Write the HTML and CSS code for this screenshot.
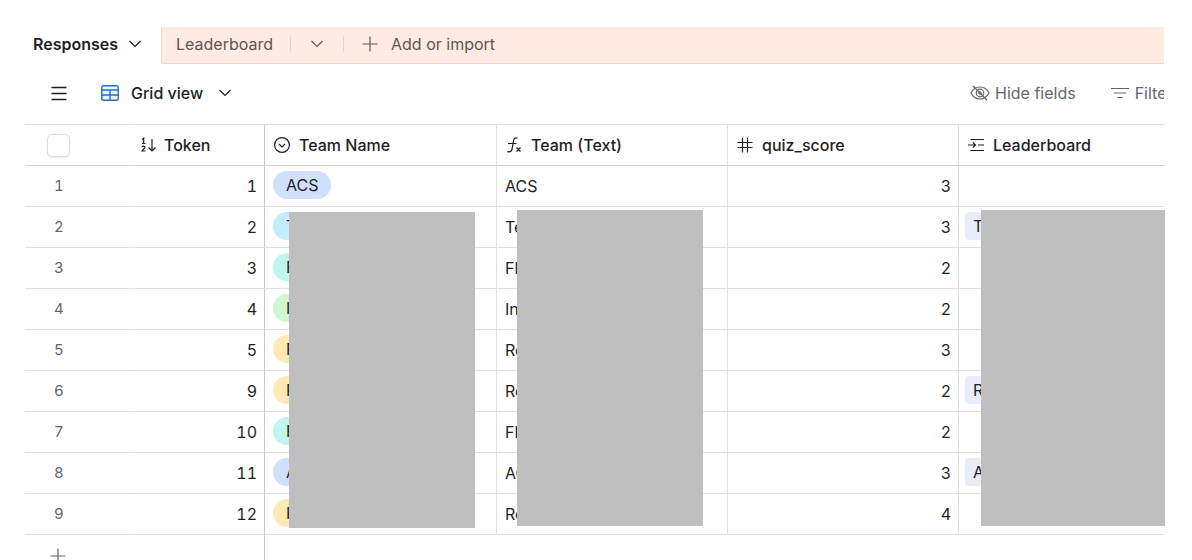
FILE: index.html
```html
<!doctype html>
<html lang="en">
  <head>
    <meta charset="utf-8">
    <title>Responses: Grid view</title>
    <meta name="viewport" content="width=device-width, initial-scale=1.0">
    <link rel="stylesheet" href="styles.css">
  </head>
  <body>
    <nav class="tabs">
      <button class="tab tab-active" type="button">
        Responses
        <svg class="chevron" viewBox="0 0 12 8"><path d="M.5 1l5.500 5.500 5.500-5.500"/></svg>
      </button>
      <div class="tab-strip">
        <button class="tab" type="button">Leaderboard</button>
        <button class="tab tab-more" type="button" aria-label="All tables">
          <svg class="chevron" viewBox="0 0 12 8"><path d="M.5 1l5.500 5.500 5.500-5.500"/></svg>
        </button>
        <button class="tab tab-add" type="button">
          <svg class="icon" viewBox="0 0 16 16"><path d="M8 .5v15M.5 8h15"/></svg>
          Add or import
        </button>
      </div>
    </nav>

    <div class="toolbar">
      <button class="tool menu" type="button" aria-label="Views">
        <svg class="icon" viewBox="0 0 16 16"><path d="M.5 2.500h15M.5 8.500h15M.5 14.500h15"/></svg>
      </button>
      <button class="tool view" type="button">
        <svg class="icon-grid" viewBox="0 0 18 16">
          <rect x=".75" y=".75" width="16.500" height="14.500" rx="1.500"/>
          <path d="M1 5h16M1 10h16M9 5v10"/>
        </svg>
        Grid view
        <svg class="chevron" viewBox="0 0 12 8"><path d="M.5 1l5.500 5.500 5.500-5.500"/></svg>
      </button>
      <div class="tool-group">
        <button class="tool hide" type="button">
          <svg class="icon-eye" viewBox="0 0 20 16">
            <path d="M1 8c2-4 5-6 9-6s7 2 9 6c-2 4-5 6-9 6S3 12 1 8z"/>
            <circle cx="10" cy="8" r="3.800"/>
            <circle cx="10" cy="8" r="1.200"/>
            <path d="M3 1l14 14"/>
          </svg>
          Hide fields
        </button>
        <button class="tool filter" type="button">
          <svg class="icon-filter" viewBox="0 0 18 12"><path d="M0 1.500h18M3 6h12M6.500 10.500h5"/></svg>
          Filter
        </button>
      </div>
    </div>

    <main class="grid">
      <div class="grid-scroll">
        <table>
          <colgroup>
            <col class="col-row">
            <col class="col-token">
            <col class="col-team">
            <col class="col-text">
            <col class="col-score">
            <col>
          </colgroup>
          <thead>
            <tr>
              <th class="row-head"><input type="checkbox" aria-label="Select all rows"></th>
              <th class="token">
                <span class="field">
                  <svg class="icon" viewBox="0 0 16 16">
                    <path d="M1 2.500l1.700-1.300v5.300M1 6.500h3.400M1 10.200c.2-1.500 3-1.500 3 .1 0 1.200-2.500 2-3 3.700h3.400M11 2v12M7.500 10.500L11 14l3.500-3.500"/>
                  </svg>
                  Token
                </span>
              </th>
              <th>
                <span class="field">
                  <svg class="icon" viewBox="0 0 16 16"><circle cx="8" cy="8" r="7.400"/><path d="M5 7l3 3 3-3"/></svg>
                  Team Name
                </span>
              </th>
              <th>
                <span class="field">
                  <svg class="icon" viewBox="0 0 16 16">
                    <path d="M11.500 1.300c-2.500-1-3.500 0-4 2.500L6 12.300c-.5 2.200-2 3-4.700 2.400M2 6.500h8.500M10.500 10.500l4 4M14.500 10.500l-4 4"/>
                  </svg>
                  Team (Text)
                </span>
              </th>
              <th>
                <span class="field">
                  <svg class="icon" viewBox="0 0 16 16"><path d="M5.500 .5v15M10.500 .5v15M.5 5.500h15M.5 10.500h15"/></svg>
                  quiz_score
                </span>
              </th>
              <th>
                <span class="field">
                  <svg class="icon" viewBox="0 0 16 16">
                    <path d="M2.500 2.500H16M2.500 13.500H16M10 8h6M0 8h7.500M5 5.500L7.500 8 5 10.500"/>
                  </svg>
                  Leaderboard
                </span>
              </th>
            </tr>
          </thead>
          <tbody>
            <tr>
              <td class="row-head">1</td>
              <td class="token">1</td>
              <td><span class="pill blue">ACS</span></td>
              <td>ACS</td>
              <td class="score">3</td>
              <td></td>
            </tr>
            <tr>
              <td class="row-head">2</td>
              <td class="token">2</td>
              <td><span class="pill cyan">Te</span></td>
              <td>Te</td>
              <td class="score">3</td>
              <td class="linked"><span class="record">T</span></td>
            </tr>
            <tr>
              <td class="row-head">3</td>
              <td class="token">3</td>
              <td><span class="pill teal">Fl</span></td>
              <td>Fl</td>
              <td class="score">2</td>
              <td></td>
            </tr>
            <tr>
              <td class="row-head">4</td>
              <td class="token">4</td>
              <td><span class="pill green">In</span></td>
              <td>In</td>
              <td class="score">2</td>
              <td></td>
            </tr>
            <tr>
              <td class="row-head">5</td>
              <td class="token">5</td>
              <td><span class="pill yellow">Ro</span></td>
              <td>Ro</td>
              <td class="score">3</td>
              <td></td>
            </tr>
            <tr>
              <td class="row-head">6</td>
              <td class="token">9</td>
              <td><span class="pill yellow">Ro</span></td>
              <td>Ro</td>
              <td class="score">2</td>
              <td class="linked"><span class="record">R</span></td>
            </tr>
            <tr>
              <td class="row-head">7</td>
              <td class="token">10</td>
              <td><span class="pill teal">Fl</span></td>
              <td>Fl</td>
              <td class="score">2</td>
              <td></td>
            </tr>
            <tr>
              <td class="row-head">8</td>
              <td class="token">11</td>
              <td><span class="pill blue">AC</span></td>
              <td>AC</td>
              <td class="score">3</td>
              <td class="linked"><span class="record">A</span></td>
            </tr>
            <tr>
              <td class="row-head">9</td>
              <td class="token">12</td>
              <td><span class="pill yellow">Ro</span></td>
              <td>Ro</td>
              <td class="score">4</td>
              <td></td>
            </tr>
          </tbody>
          <tfoot>
            <tr>
              <td class="row-head">
                <button class="add-row" type="button" aria-label="Add record">
                  <svg class="icon" viewBox="0 0 16 16"><path d="M8 .5v15M.5 8h15"/></svg>
                </button>
              </td>
              <td class="token"></td>
              <td colspan="4"></td>
            </tr>
          </tfoot>
        </table>
      </div>

      <!-- redacted names -->
      <div class="cover cover-team"></div>
      <div class="cover cover-text"></div>
      <div class="cover cover-linked"></div>
    </main>
  </body>
</html>
```

FILE: styles.css
```css
:root {
  --fg: #1d1f25;
  --muted: #616670;
  --line: #dfdfdf;
  --line-dark: #c8c8c8;
  --peach: #ffebe3;
  --peach-fg: #5f5550;
}

* {
  box-sizing: border-box;
}

body {
  display: flex;
  flex-direction: column;
  height: 100vh;
  margin: 0;
  padding: 27px 28px 0 25px;
  overflow: hidden;
  background: white;
  color: var(--fg);
  font-family: Inter, "Liberation Sans", sans-serif;
  font-size: 16px;
  line-height: 24px;
}

button {
  display: flex;
  align-items: center;
  padding: 0;
  border: 0;
  background: none;
  color: inherit;
  font: inherit;
  white-space: nowrap;
}

svg {
  flex: none;
  fill: none;
  stroke: currentColor;
  stroke-width: 1.2;
}

.icon {
  width: 16px;
  height: 16px;
}

.chevron {
  width: 12px;
  height: 8px;
}

/* Tables */
.tabs {
  display: flex;
  flex: none;
  height: 37px;
}

.tab-active {
  gap: 11px;
  width: 136px;
  padding: 0 0 3px 8px;
  font-weight: 600;
}

.tab-strip {
  display: flex;
  flex: 1;
  align-items: center;
  padding: 0 0 2px 14px;
  border-bottom: 1px solid #efd6cd;
  border-left: 1px solid #efd6cd;
  border-bottom-left-radius: 3px;
  background: var(--peach);
  color: var(--peach-fg);
}

.tab-more {
  justify-content: center;
  width: 54px;
  height: 16px;
  margin: 0 18px 0 17px;
  border: solid #e6d0c8;
  border-width: 0 1px;
}

.tab-add {
  gap: 13px;
}

/* View bar */
.toolbar {
  display: flex;
  flex: none;
  align-items: center;
  height: 60px;
  padding: 0 0 2px 26px;
}

.menu .icon {
  stroke-width: 1.4;
}

.view {
  gap: 12px;
  margin-left: 34px;
  font-weight: 500;
}

.view .chevron {
  margin-left: 4px;
}

.icon-grid {
  width: 18px;
  height: 16px;
  fill: #e8f3ff;
  stroke: #2a6fc9;
  stroke-width: 1.4;
}

.tool-group {
  display: flex;
  gap: 35px;
  width: 194px;
  margin-left: auto;
  overflow: hidden;
  color: var(--muted);
}

.hide {
  gap: 5px;
}

.icon-eye {
  width: 20px;
  height: 16px;
}

.filter {
  gap: 6px;
}

.icon-filter {
  width: 18px;
  height: 12px;
}

/* Grid */
.grid {
  position: relative;
  flex: 1;
  min-height: 0;
}

.grid-scroll {
  height: 100%;
  overflow: hidden;
}

table {
  width: 100%;
  border-spacing: 0;
  table-layout: fixed;
}

.col-row {
  width: 107px;
}

.col-token {
  width: 133px;
}

.col-team {
  width: 232px;
}

.col-text,
.col-score {
  width: 231px;
}

th,
td {
  height: 41px;
  padding: 0 8px;
  border-right: 1px solid var(--line);
  border-bottom: 1px solid var(--line);
  text-align: left;
  white-space: nowrap;
}

th {
  height: 42px;
  padding: 0 9px;
  border-top: 1px solid var(--line);
  border-bottom-color: #d4d4d4;
  font-weight: 500;
}

th:last-child,
td:last-child {
  border-right: 0;
}

.field {
  display: flex;
  gap: 9px;
  align-items: center;
}

.token .field {
  gap: 7px;
}

.row-head {
  padding: 0 0 0 22px;
  border-right-color: white;
  color: var(--muted);
  font-size: 15px;
  font-variant-numeric: tabular-nums;
}

td.row-head {
  padding-left: 29px;
}

.token {
  border-right-color: var(--line-dark);
}

td.token,
.score {
  padding-right: 7px;
  font-variant-numeric: tabular-nums;
  text-align: right;
}

input[type="checkbox"] {
  display: block;
  width: 23px;
  height: 23px;
  margin: 0;
  border: 1px solid #dcdcdc;
  border-radius: 5px;
  appearance: none;
  background: white;
  box-shadow: 0 1px 1px #00000014;
}

.pill,
.record {
  display: block;
  width: fit-content;
  height: 28px;
  margin-bottom: 2px;
  line-height: 28px;
}

.pill {
  padding: 0 13px;
  border-radius: 14px;
}

.blue {
  background: #d1e0ff;
}

.cyan {
  background: #c4ebff;
}

.teal {
  background: #c1f5f0;
}

.green {
  background: #cff5d1;
}

.yellow {
  background: #ffeab6;
}

.linked {
  padding-left: 6px;
}

.record {
  padding: 0 8px;
  border-radius: 4px;
  background: #e9edfa;
}

tfoot td {
  border-right-color: white;
  border-bottom: 0;
}

tfoot .token {
  border-right-color: var(--line-dark);
}

tfoot td.row-head {
  padding-left: 25px;
}

.cover {
  position: absolute;
  top: 86px;
  width: 186px;
  height: 316px;
  background: #bfbfbf;
}

.cover-team {
  top: 88px;
  left: 264px;
}

.cover-text {
  left: 492px;
}

.cover-linked {
  right: -1px;
  left: 956px;
  width: auto;
}
```
